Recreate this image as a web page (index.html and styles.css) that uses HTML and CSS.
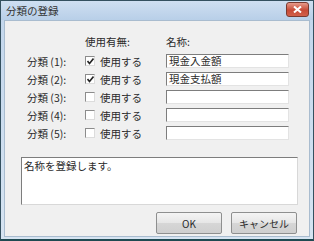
FILE: index.html
```html
<!DOCTYPE html>
<html lang="ja">
<head>
  <meta charset="UTF-8">
  <title>分類の登録</title>
  <link rel="stylesheet" href="styles.css">
</head>
<body>
  <div class="window">
    <div class="titlebar">
      <span class="title">分類の登録</span>
      <span class="close">
        <svg width="9" height="7" viewBox="0 0 9 7"><path d="M1 0.5 L8 6.5 M8 0.5 L1 6.5" stroke="#fff" stroke-width="2"/></svg>
      </span>
    </div>

    <div class="client">
      <div class="form">
        <span></span>
        <span class="head">使用有無:</span>
        <span class="head">名称:</span>

        <span class="label">分類 (1):</span>
        <label class="check"><span class="box on"><svg width="7" height="7" viewBox="0 0 7 7"><path d="M0.5 3 L2.5 5.5 L6.5 0.5" fill="none" stroke="#222" stroke-width="1.6"/></svg></span>使用する</label>
        <span class="field">現金入金額</span>

        <span class="label">分類 (2):</span>
        <label class="check"><span class="box on"><svg width="7" height="7" viewBox="0 0 7 7"><path d="M0.5 3 L2.5 5.5 L6.5 0.5" fill="none" stroke="#222" stroke-width="1.6"/></svg></span>使用する</label>
        <span class="field">現金支払額</span>

        <span class="label">分類 (3):</span>
        <label class="check"><span class="box"></span>使用する</label>
        <span class="field"></span>

        <span class="label">分類 (4):</span>
        <label class="check"><span class="box"></span>使用する</label>
        <span class="field"></span>

        <span class="label">分類 (5):</span>
        <label class="check"><span class="box"></span>使用する</label>
        <span class="field"></span>
      </div>

      <div class="memo">名称を登録します。</div>

      <div class="buttons">
        <span class="btn">OK</span>
        <span class="btn">キャンセル</span>
      </div>
    </div>
  </div>
</body>
</html>
```

FILE: styles.css
```css
body {
  margin: 0;
  font-family: "Noto Sans CJK JP", "Liberation Sans", sans-serif;
  font-size: 10.5px;
  color: #2a2a2a;
}
.window {
  width: 314px;
  height: 241px;
  box-sizing: border-box;
  border: 1px solid #34505f;
  border-bottom: 2px solid #1f4a52;
  background: linear-gradient(#c2d6ec, #d6e4f2);
  display: flex;
  flex-direction: column;
}
.titlebar {
  height: 19px;
  display: flex;
  align-items: center;
  justify-content: space-between;
  padding: 0 4px 0 5px;
  background: linear-gradient(#cfdff1, #b8cfe8);
}
.title {
  font-size: 10.5px;
  color: #333;
}
.close {
  width: 21px;
  height: 13px;
  margin-top: -3px;
  border: 1px solid #7a3a30;
  border-radius: 3px;
  background: linear-gradient(#e79a8a, #c74a36 55%, #d2604a);
  display: flex;
  align-items: center;
  justify-content: center;
}
.client {
  flex: 1;
  margin: 0 3px 2px;
  background: #f0f0f0;
  border: 1px solid #a9bccf;
  padding: 13px 0 0 21px;
  display: flex;
  flex-direction: column;
}
.form {
  display: grid;
  grid-template-columns: 59px 81px 123px;
  grid-template-rows: 16px repeat(5, 14px);
  row-gap: 4px;
  align-items: center;
}
.head {
  align-self: start;
}
.label {
  padding-left: 1px;
}
.check {
  display: flex;
  align-items: center;
  gap: 5px;
}
.box {
  width: 8px;
  height: 8px;
  border-top: 1px solid #8c8c8c;
  border-left: 1px solid #8c8c8c;
  border-right: 1px solid #dcdcdc;
  border-bottom: 1px solid #dcdcdc;
  background: #fff;
  display: flex;
  align-items: center;
  justify-content: center;
}
.field {
  height: 14px;
  box-sizing: border-box;
  border-top: 1px solid #7d7d7d;
  border-left: 1px solid #7d7d7d;
  border-right: 1px solid #e3e3e3;
  border-bottom: 1px solid #e3e3e3;
  background: #fff;
  padding-left: 2px;
  line-height: 12px;
}
.memo {
  width: 277px;
  height: 48px;
  box-sizing: border-box;
  margin: 17px 0 0 -5px;
  border-top: 1px solid #7d7d7d;
  border-left: 1px solid #7d7d7d;
  border-right: 1px solid #d8d8d8;
  border-bottom: 1px solid #d8d8d8;
  background: #fff;
  padding: 1px 2px;
  line-height: 14px;
}
.buttons {
  display: flex;
  gap: 9px;
  margin: 7px 0 0 130px;
}
.btn {
  width: 66px;
  height: 22px;
  box-sizing: border-box;
  border: 1px solid #8e8f8f;
  border-radius: 2px;
  background: linear-gradient(#f4f4f4, #e6e6e6 50%, #d6d6d6 51%, #cfcfcf);
  display: flex;
  align-items: center;
  justify-content: center;
  font-size: 10px;
}
```
